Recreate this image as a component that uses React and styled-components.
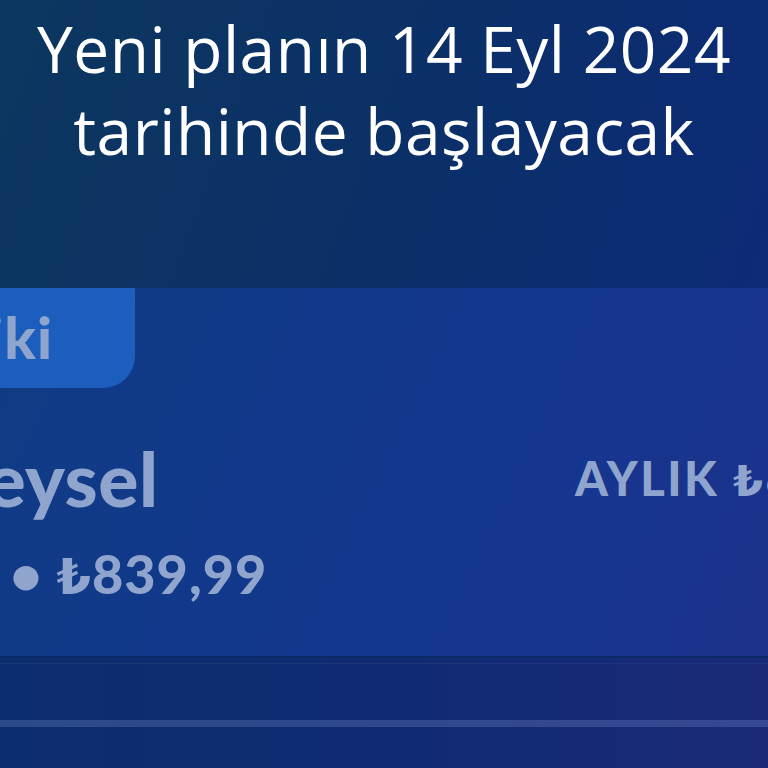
import React from "react";
import styled, { createGlobalStyle } from "styled-components";

const Global = createGlobalStyle`
  html, body { margin: 0; padding: 0; width: 768px; height: 768px; overflow: hidden; }
  body { background: #0c3160; }
`;

const Page = styled.div`
  width: 768px;
  height: 768px;
  overflow: hidden;
  display: flex;
  flex-direction: column;
  background: linear-gradient(110deg, #0c375f 0%, #0b3068 45%, #0c2c74 75%, #11297a 100%);
`;

const Header = styled.header`
  height: 288px;
  box-sizing: border-box;
  padding-top: 8px;
  text-align: center;
  color: #ffffff;
  font-family: "Open Sans", "Noto Sans", sans-serif;
  font-weight: 400;
  font-size: 64px;
  line-height: 82px;
  letter-spacing: 0.5px;
`;

const Title = styled.h1`
  margin: 0;
  font: inherit;
`;

const Card = styled.section`
  flex: none;
  height: 368px;
  margin-left: -300px;
  width: 1300px;
  display: flex;
  flex-direction: column;
  background: linear-gradient(115deg, #0f3f7d 0%, #11398a 40%, #15368f 65%, #1e328b 85%, #252f86 100%);
  font-family: "Lato", "DejaVu Sans", sans-serif;
  font-weight: 900;
  color: #8fa5cd;
`;

const Currency = styled.span`
  font-family: "DejaVu Sans", sans-serif;
  font-weight: 700;
  font-size: 0.92em;
`;

const Tab = styled.div`
  width: 435px;
  height: 100px;
  box-sizing: border-box;
  display: flex;
  align-items: center;
  justify-content: flex-end;
  padding-right: 82px;
  padding-bottom: 4px;
  background: #1b5ebd;
  border-bottom-right-radius: 32px;
  font-size: 58px;
  letter-spacing: 1px;
`;

const Body = styled.div`
  display: grid;
  grid-template-columns: 875px 1fr;
  padding-top: 44px;
`;

const Left = styled.div`
  display: flex;
  flex-direction: column;
  align-items: flex-start;
`;

const PlanName = styled.div`
  padding-left: ${(p) => p.$indent}px;
  font-size: 75px;
  line-height: 92px;
  letter-spacing: 0.5px;
`;

const PlanPrice = styled.div`
  padding-left: ${(p) => p.$indent}px;
  margin-top: 17px;
  font-size: 54px;
  line-height: 66px;
  letter-spacing: 1px;
`;

const Right = styled.div`
  padding-top: 18px;
  font-size: 47px;
  line-height: 56px;
  letter-spacing: 2.5px;
  white-space: nowrap;
`;

const Footer = styled.div`
  flex: 1;
  display: flex;
  flex-direction: column;
  background: linear-gradient(90deg, #0c2d6e 0%, #102b72 50%, #1a2a78 100%);
  border-top: 2px solid #0b2a68;
`;

const FaintRule = styled.div`
  margin-top: 5px;
  height: 1px;
  background: rgba(255, 255, 255, 0.05);
`;

const Spacer = styled.div`
  height: 56px;
`;

const Rule = styled.div`
  height: 7px;
  background: rgba(130, 150, 210, 0.28);
`;

export default function App() {
  return (
    <>
      <Global />
      <Page>
        <Header>
          <Title>
            Yeni planın 14 Eyl 2024
            <br />
            tarihinde başlayacak
          </Title>
        </Header>
        <Card>
          <Tab>Şimdiki</Tab>
          <Body>
            <Left>
              <PlanName $indent={188}>Bireysel</PlanName>
              <PlanPrice $indent={170}>
                Aylık • <Currency>₺</Currency>839,99
              </PlanPrice>
            </Left>
            <Right>
              AYLIK <Currency>₺</Currency>839,99
            </Right>
          </Body>
        </Card>
        <Footer>
          <FaintRule />
          <Spacer />
          <Rule />
        </Footer>
      </Page>
    </>
  );
}
